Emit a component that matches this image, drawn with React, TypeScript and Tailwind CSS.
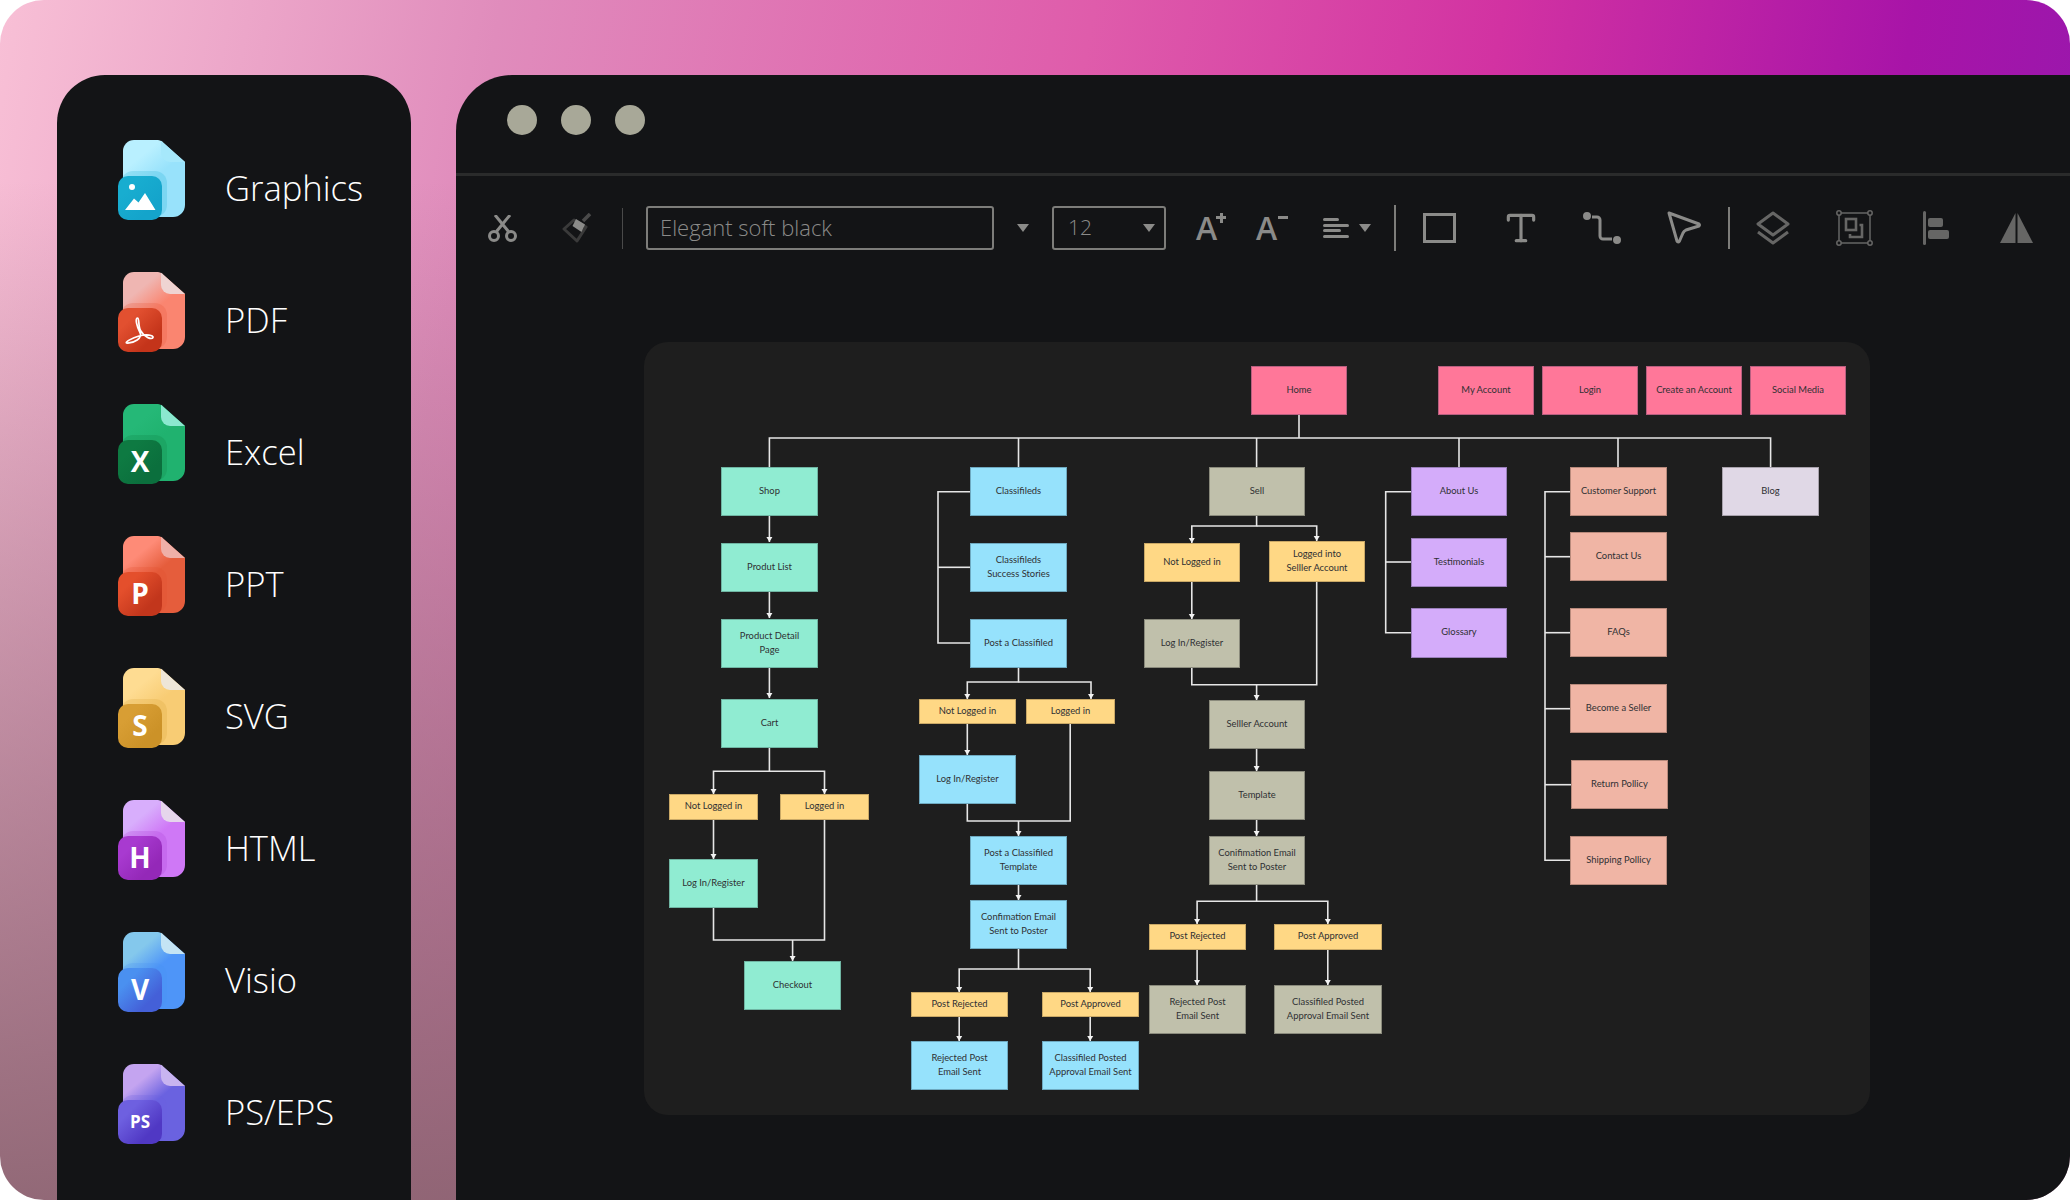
import type { ReactNode } from "react";
import { Type } from "lucide-react";

const mint = "bg-[#90ecd2] border-[#6fb5a3]";
const blue = "bg-[#96e2fc] border-[#6ea9c0]";
const olive = "bg-[#c0c0ab] border-[#8a8a7c]";
const yellow = "bg-[#ffd885] border-[#c9a866]";
const pink = "bg-[#ff7799] border-[#b85f80]";
const purple = "bg-[#d4acfa] border-[#9a80ba]";
const salmon = "bg-[#f0b5a5] border-[#b88a7c]";
const lilac = "bg-[#e0d8e6] border-[#a8a2ac]";

// x, y, w, h are page coordinates, the canvas origin is taken off when drawn
type ChartNode = { label: string[]; x: number; y: number; w: number; h: number; color: string };

const n = (label: string, x: number, y: number, w: number, h: number, color: string): ChartNode => ({
  label: label.split("|"),
  x,
  y,
  w,
  h,
  color,
});

const nodes: ChartNode[] = [
  n("Home", 1251, 366, 96, 49, pink),
  n("My Account", 1438, 366, 96, 49, pink),
  n("Login", 1542, 366, 96, 49, pink),
  n("Create an Account", 1646, 366, 96, 49, pink),
  n("Social Media", 1750, 366, 96, 49, pink),

  n("Shop", 721, 467, 97, 49, mint),
  n("Produt List", 721, 543, 97, 49, mint),
  n("Product Detail|Page", 721, 619, 97, 49, mint),
  n("Cart", 721, 699, 97, 49, mint),
  n("Not Logged in", 669, 794, 89, 26, yellow),
  n("Logged in", 780, 794, 89, 26, yellow),
  n("Log In/Register", 669, 859, 89, 49, mint),
  n("Checkout", 744, 961, 97, 49, mint),

  n("Classifileds", 970, 467, 97, 49, blue),
  n("Classifileds|Success Stories", 970, 543, 97, 49, blue),
  n("Post a Classifiled", 970, 619, 97, 49, blue),
  n("Not Logged in", 919, 699, 97, 25, yellow),
  n("Logged in", 1026, 699, 89, 25, yellow),
  n("Log In/Register", 919, 755, 97, 49, blue),
  n("Post a Classifiled|Template", 970, 836, 97, 49, blue),
  n("Confimation Email|Sent to Poster", 970, 900, 97, 49, blue),
  n("Post Rejected", 911, 992, 97, 25, yellow),
  n("Post Approved", 1042, 992, 97, 25, yellow),
  n("Rejected Post|Email Sent", 911, 1041, 97, 49, blue),
  n("Classifiled Posted|Approval Email Sent", 1042, 1041, 97, 49, blue),

  n("Sell", 1209, 467, 96, 49, olive),
  n("Not Logged in", 1144, 543, 96, 39, yellow),
  n("Logged into|Selller Account", 1269, 541, 96, 41, yellow),
  n("Log In/Register", 1144, 619, 96, 49, olive),
  n("Selller Account", 1209, 700, 96, 49, olive),
  n("Template", 1209, 771, 96, 49, olive),
  n("Conifimation Email|Sent to Poster", 1209, 836, 96, 49, olive),
  n("Post Rejected", 1149, 924, 97, 26, yellow),
  n("Post Approved", 1274, 924, 108, 26, yellow),
  n("Rejected Post|Email Sent", 1149, 985, 97, 49, olive),
  n("Classifiled Posted|Approval Email Sent", 1274, 985, 108, 49, olive),

  n("About Us", 1411, 467, 96, 49, purple),
  n("Testimonials", 1411, 538, 96, 49, purple),
  n("Glossary", 1411, 608, 96, 50, purple),

  n("Customer Support", 1570, 467, 97, 49, salmon),
  n("Contact Us", 1570, 532, 97, 49, salmon),
  n("FAQs", 1570, 608, 97, 49, salmon),
  n("Become a Seller", 1570, 684, 97, 49, salmon),
  n("Return Pollicy", 1571, 760, 97, 49, salmon),
  n("Shipping Pollicy", 1570, 836, 97, 49, salmon),

  n("Blog", 1722, 467, 97, 49, lilac),
];

// plain connector lines
const lines = [
  "M1299 415V438",
  "M769.4 467V438H1770.6V467",
  "M1018.5 438V467",
  "M1256.6 438V467",
  "M1459 438V467",
  "M1618 438V467",
  // classifieds bracket
  "M970 491.7H938V643H970",
  "M938 567.3H970",
  // about bracket
  "M1411 491.7H1385.7V632.7H1411",
  "M1385.7 562H1411",
  // support bracket
  "M1570 491.7H1545V860.3H1570",
  "M1545 556.7H1570",
  "M1545 632.7H1570",
  "M1545 708.7H1570",
  "M1545 784.7H1571",
];

// lines that run down onto a node
const arrows = [
  "M769.4 516V542",
  "M769.4 592V618",
  "M769.4 668V698",
  "M769.4 748V771.3H713.5V794",
  "M769.4 771.3H824.5V794",
  "M713.5 820V859",
  "M713.5 908V940H824.5V820",
  "M792.6 940V961",

  "M1018.5 668V682H967.3V699",
  "M1018.5 682H1091V699",
  "M967.3 724V755",
  "M967.3 804V821H1070.2V724",
  "M1018.5 821V836",
  "M1018.5 885V900",
  "M1018.5 949V969H959.2V992",
  "M1018.5 969H1090.2V992",
  "M959.2 1017V1041",
  "M1090.2 1017V1041",

  "M1256.6 516V526H1191.8V543",
  "M1256.6 526H1316.7V541",
  "M1191.8 582V619",
  "M1191.8 668V684.7H1316.7V582",
  "M1256.6 684.7V700",
  "M1256.6 749V771",
  "M1256.6 820V836",
  "M1256.6 885V901.3H1197.1V924",
  "M1256.6 901.3H1327.8V924",
  "M1197.1 950V985",
  "M1327.8 950V985",
];

// only the lines that really end going down onto a node get a head
const heads: [number, number][] = [
  [769.4, 542], [769.4, 618], [769.4, 698], [713.5, 794], [824.5, 794], [713.5, 859], [792.6, 961],
  [967.3, 699], [1091, 699], [967.3, 755], [1018.5, 836], [1018.5, 900], [959.2, 992], [1090.2, 992],
  [959.2, 1041], [1090.2, 1041],
  [1191.8, 543], [1316.7, 541], [1191.8, 619], [1256.6, 700], [1256.6, 771], [1256.6, 836],
  [1197.1, 924], [1327.8, 924], [1197.1, 985], [1327.8, 985],
];

function Chart() {
  return (
    <div className="relative ml-[188px] mt-[92px] h-[773px] w-[1226px] rounded-[24px] bg-[#1e1e1e] font-['Lato',sans-serif] text-[#2f3033]">
      <svg className="absolute inset-0" width="1226" height="773" viewBox="644 342 1226 773" fill="none">
        {[...lines, ...arrows].map((d) => (
          <path key={d} d={d} stroke="#e6e6e6" strokeWidth="1.6" />
        ))}
        {heads.map(([x, y]) => (
          <path key={`${x}-${y}`} d={`M${x - 3} ${y - 5}H${x + 3}L${x} ${y}Z`} fill="#f2f2f2" />
        ))}
      </svg>
      {nodes.map((node) => (
        <div
          key={`${node.label.join()}-${node.x}`}
          className={`absolute flex flex-col items-center justify-center border pb-[1px] text-center text-[9.4px] leading-[14.5px] ${node.color}`}
          style={{ left: node.x - 644, top: node.y - 342, width: node.w, height: node.h }}
        >
          {node.label.map((line) => (
            <span key={line} className="whitespace-nowrap">
              {line}
            </span>
          ))}
        </div>
      ))}
    </div>
  );
}

type FileIconProps = {
  id: string;
  top: string;
  bottom: string;
  fold: string;
  badgeFrom: string;
  badgeTo: string;
  children: ReactNode;
};

function FileIcon({ id, top, bottom, fold, badgeFrom, badgeTo, children }: FileIconProps) {
  return (
    <svg width="68" height="80" viewBox="0 0 68 80" className="shrink-0">
      <defs>
        <linearGradient id={`${id}-doc`} x1="0.2" y1="0" x2="0.7" y2="0.75">
          <stop offset="0.25" stopColor={top} />
          <stop offset="0.65" stopColor={bottom} />
        </linearGradient>
        <linearGradient id={`${id}-badge`} x1="0.1" y1="0.1" x2="0.9" y2="0.9">
          <stop offset="0.2" stopColor={badgeFrom} />
          <stop offset="0.8" stopColor={badgeTo} />
        </linearGradient>
      </defs>
      <path d="M5 11A11 11 0 0 1 16 0H40Q42 0 44 1.5L67 22V65A12 12 0 0 1 55 77H16Q5 77 5 66Z" fill={`url(#${id}-doc)`} />
      <path d="M43 0.8L67 22H52A9 9 0 0 1 43 13Z" fill={fold} />
      <rect x="3" y="31" width="46" height="46" rx="12" fill={badgeFrom} opacity="0.22" />
      <rect x="0" y="36" width="44" height="44" rx="10" fill={`url(#${id}-badge)`} />
      {children}
    </svg>
  );
}

function BadgeLetter({ text, size = 28 }: { text: string; size?: number }) {
  return (
    <text x="22" y="58" dy="0.36em" textAnchor="middle" fontSize={size} fontWeight="700" fill="#fff" fontFamily="'Open Sans', sans-serif">
      {text}
    </text>
  );
}

const files = [
  {
    name: "Graphics",
    icon: (
      <FileIcon id="gfx" top="#b9f0ff" bottom="#98e2fb" fold="#a6e8fb" badgeFrom="#18add0" badgeTo="#14a4cb">
        <circle cx="14" cy="47" r="3" fill="#fff" />
        <path d="M7 70L16 58.5L20.5 62.5L27 53L37.5 70Z" fill="#fff" />
      </FileIcon>
    ),
  },
  {
    name: "PDF",
    icon: (
      <FileIcon id="pdf" top="#efb6b2" bottom="#fa8570" fold="#efd4d2" badgeFrom="#e25030" badgeTo="#c4341a">
        <path
          d="M19.5 46C17 46 18.5 54 22 60.5C25 66 16 71.5 8.5 71C7 70 14 66 21 64C28 62 36 63 35 65.5C33.5 68 26 65 22.5 58.5C20 54 21.5 46 19.5 46Z"
          fill="none"
          stroke="#fff"
          strokeWidth="1.7"
          strokeLinejoin="round"
        />
      </FileIcon>
    ),
  },
  {
    name: "Excel",
    icon: (
      <FileIcon id="xls" top="#25b877" bottom="#20b26f" fold="#8be8cf" badgeFrom="#0e7a42" badgeTo="#0b6f3d">
        <BadgeLetter text="X" />
      </FileIcon>
    ),
  },
  {
    name: "PPT",
    icon: (
      <FileIcon id="ppt" top="#fe8b77" bottom="#e55d3c" fold="#efb0a8" badgeFrom="#e44f2c" badgeTo="#c2361c">
        <BadgeLetter text="P" />
      </FileIcon>
    ),
  },
  {
    name: "SVG",
    icon: (
      <FileIcon id="svg" top="#fedc92" bottom="#f8cc74" fold="#eee6d8" badgeFrom="#d89e34" badgeTo="#cc9228">
        <BadgeLetter text="S" />
      </FileIcon>
    ),
  },
  {
    name: "HTML",
    icon: (
      <FileIcon id="html" top="#d8aefc" bottom="#cf78f6" fold="#e6d6ec" badgeFrom="#a83ad0" badgeTo="#9428b8">
        <BadgeLetter text="H" />
      </FileIcon>
    ),
  },
  {
    name: "Visio",
    icon: (
      <FileIcon id="vsd" top="#84c8ec" bottom="#4e95f8" fold="#c4e4f4" badgeFrom="#4a90f0" badgeTo="#4460d8">
        <BadgeLetter text="V" />
      </FileIcon>
    ),
  },
  {
    name: "PS/EPS",
    icon: (
      <FileIcon id="eps" top="#c4a4f0" bottom="#6a62e0" fold="#c8b4f0" badgeFrom="#6e60e0" badgeTo="#5038c4">
        <BadgeLetter text="PS" size={17} />
      </FileIcon>
    ),
  },
];

function Sidebar() {
  return (
    <aside className="flex h-[1125px] w-[354px] shrink-0 flex-col gap-[52px] rounded-t-[48px] bg-[#131416] pl-[61px] pt-[65px]">
      {files.map((file) => (
        <div key={file.name} className="flex h-[80px] items-center gap-[39px]">
          {file.icon}
          <span className="pt-[16px] font-['Open_Sans',sans-serif] text-[34.6px] font-light text-white">{file.name}</span>
        </div>
      ))}
    </aside>
  );
}

function Caret({ className }: { className: string }) {
  return (
    <svg width="12" height="8" viewBox="0 0 12 8" className={className}>
      <path d="M0 0H12L6 8Z" fill="#8b8b89" />
    </svg>
  );
}

function Toolbar() {
  const stroke = "#8b8b89";
  const dim = "#666665";
  return (
    <div className="mt-[30px] flex h-[44px] items-center font-['Open_Sans',sans-serif] text-[#8b8b89]">
      <svg width="31" height="27" viewBox="0 0 31 27" fill="none" stroke={stroke} strokeWidth="3" className="ml-[31px] shrink-0">
        <circle cx="7" cy="21" r="4.5" />
        <circle cx="24" cy="21" r="4.5" />
        <path d="M9.5 16.5L23 0M21.5 16.5L8 0" />
      </svg>
      <svg width="31" height="30" viewBox="0 0 31 30" fill="none" className="ml-[43px] shrink-0">
        <path d="M13 7L25 14L16 28L3 16Z" stroke="#3a3a3a" strokeWidth="3" strokeLinejoin="round" />
        <path d="M15 6L24 11.5L20.5 19L11.5 13Z" fill={stroke} />
        <path d="M22 8L29 1" stroke="#4a4a4a" strokeWidth="3.5" />
      </svg>
      <div className="ml-[30px] h-[41px] w-px shrink-0 bg-[#4a4a4a]" />
      <div className="ml-[23px] flex h-[44px] w-[348px] shrink-0 items-center rounded-[3px] border-2 border-[#7d7d7a] pb-[2px] pl-[12px] text-[22px] font-light">
        Elegant soft black
      </div>
      <Caret className="ml-[23px] shrink-0" />
      <div className="ml-[23px] flex h-[44px] w-[114px] shrink-0 items-center justify-between rounded-[3px] border-2 border-[#7d7d7a] pl-[14px] pr-[9px] text-[21px] font-light">
        12
        <Caret className="shrink-0" />
      </div>
      <div className="relative ml-[30px] h-[44px] w-[30px] shrink-0">
        <span className="absolute bottom-0 left-0 text-[32px] font-semibold leading-[44px]">A</span>
        <div className="absolute left-[20px] top-[10px] h-[3px] w-[10px] bg-[#8b8b89]" />
        <div className="absolute left-[23.5px] top-[6.5px] h-[10px] w-[3px] bg-[#8b8b89]" />
      </div>
      <div className="relative ml-[30px] h-[44px] w-[32px] shrink-0">
        <span className="absolute bottom-0 left-0 text-[32px] font-semibold leading-[44px]">A</span>
        <div className="absolute left-[22px] top-[10px] h-[3px] w-[10px] bg-[#8b8b89]" />
      </div>
      <div className="ml-[35px] flex w-[26px] shrink-0 flex-col gap-[2.5px]">
        <div className="h-[3px] w-[16px] rounded-full bg-[#8b8b89]" />
        <div className="h-[3px] w-[26px] rounded-full bg-[#8b8b89]" />
        <div className="h-[3px] w-[18px] rounded-full bg-[#8b8b89]" />
        <div className="h-[3px] w-[26px] rounded-full bg-[#8b8b89]" />
      </div>
      <Caret className="ml-[10px] shrink-0" />
      <div className="ml-[23px] h-[46px] w-[2px] shrink-0 bg-[#7d7d7a]" />
      <div className="ml-[27px] h-[30px] w-[33px] shrink-0 border-[3px] border-[#8b8b89]" />
      <Type className="ml-[50px] h-[38px] w-[38px] shrink-0 -translate-x-[4px]" strokeWidth={2} />
      <svg width="38" height="32" viewBox="0 0 38 32" fill="none" stroke={stroke} strokeWidth="3" className="ml-[39px] shrink-0">
        <circle cx="4" cy="4" r="2.5" fill={stroke} />
        <path d="M9 5H14A3 3 0 0 1 17 8V24A3 3 0 0 0 20 27H29" />
        <circle cx="34" cy="28" r="2.5" fill={stroke} />
      </svg>
      <svg width="35" height="34" viewBox="0 0 35 34" fill="none" stroke={stroke} strokeWidth="3" strokeLinejoin="round" className="ml-[46px] shrink-0">
        <path d="M2 2L32 13Q33 14 32 15L19 19Q17 20 16 22L12.5 30Q11 32 10 30Z" />
      </svg>
      <div className="ml-[26px] h-[42px] w-[2px] shrink-0 bg-[#7d7d7a]" />
      <svg width="34" height="34" viewBox="0 0 34 34" fill="none" stroke={dim} strokeWidth="3" strokeLinejoin="round" className="ml-[26px] shrink-0">
        <path d="M17 2L32 13L17 24L2 13Z" />
        <path d="M2 21L17 32L32 21" />
      </svg>
      <svg width="37" height="36" viewBox="0 0 37 36" fill="none" stroke={dim} className="ml-[46px] shrink-0">
        <rect x="3" y="3" width="31" height="30" strokeWidth="1.5" />
        <circle cx="3" cy="3" r="2.2" fill="#131416" strokeWidth="1.5" />
        <circle cx="34" cy="3" r="2.2" fill="#131416" strokeWidth="1.5" />
        <circle cx="3" cy="33" r="2.2" fill="#131416" strokeWidth="1.5" />
        <circle cx="34" cy="33" r="2.2" fill="#131416" strokeWidth="1.5" />
        <rect x="10" y="9" width="10" height="11" strokeWidth="2.6" />
        <path d="M23.5 15H26V27H14V24" strokeWidth="2.6" />
      </svg>
      <svg width="26" height="34" viewBox="0 0 26 34" fill={dim} className="ml-[50px] shrink-0">
        <rect x="0" y="0" width="3" height="34" rx="1.5" />
        <rect x="5" y="7" width="15" height="9" rx="2" />
        <rect x="5" y="19" width="21" height="9" rx="2" />
      </svg>
      <svg width="33" height="30" viewBox="0 0 33 30" fill={dim} className="ml-[51px] shrink-0">
        <path d="M0 30L15.5 0V30Z" />
        <path d="M17.5 0L33 30H17.5Z" />
      </svg>
    </div>
  );
}

export default function App() {
  return (
    <div className="h-[1200px] w-[2070px] overflow-hidden bg-white">
      <div className="flex h-full gap-[45px] overflow-hidden rounded-[44px] bg-[linear-gradient(180deg,rgba(120,100,110,0)_15%,rgba(136,98,110,0.9)_100%),linear-gradient(100deg,#f8c0d6_0%,#e08cbc_22%,#df5cab_48%,#d232a2_66%,#a814a8_84%,#8e1ab0_100%)] pl-[57px] pt-[75px]">
        <Sidebar />
        <main className="h-[1125px] flex-1 rounded-tl-[56px] bg-[#131416]">
          <div className="flex h-[101px] items-center gap-[24px] border-b-[3px] border-[#2a2b2b] pb-[8px] pl-[51px]">
            <div className="h-[30px] w-[30px] rounded-full bg-[#a8a898]" />
            <div className="h-[30px] w-[30px] rounded-full bg-[#a8a898]" />
            <div className="h-[30px] w-[30px] rounded-full bg-[#a8a898]" />
          </div>
          <Toolbar />
          <Chart />
        </main>
      </div>
    </div>
  );
}
